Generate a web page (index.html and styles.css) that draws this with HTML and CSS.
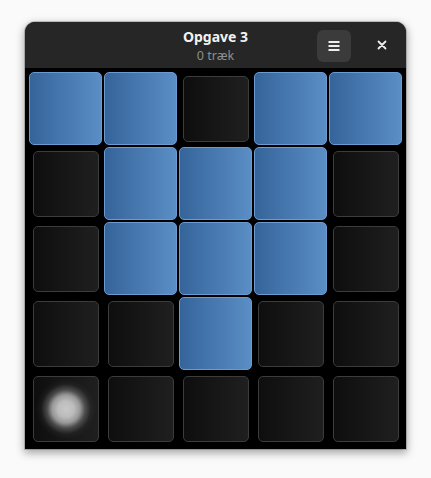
FILE: index.html
```html
<!DOCTYPE html>
<html>
<head>
<meta charset="utf-8">
<link rel="stylesheet" href="styles.css">
</head>
<body>
<div class="window">
  <header class="headerbar">
    <div class="titles">
      <div class="title">Opgave 3</div>
      <div class="subtitle">0 træk</div>
    </div>
    <button class="menu-btn" aria-label="Menu">
      <svg width="12" height="11" viewBox="0 0 12 11"><rect x="0.5" y="1" width="11" height="2" fill="#eee"/><rect x="0.5" y="5" width="11" height="2" fill="#eee"/><rect x="0.5" y="9" width="11" height="2" fill="#eee"/></svg>
    </button>
    <button class="close-btn" aria-label="Luk">
      <svg width="10" height="10" viewBox="0 0 10 10"><path d="M1.5 1.5 L8.5 8.5 M8.5 1.5 L1.5 8.5" stroke="#eee" stroke-width="1.8" stroke-linecap="round"/></svg>
    </button>
  </header>
  <main class="board">
    <div class="cell"><div class="tile on"></div></div>
    <div class="cell"><div class="tile on"></div></div>
    <div class="cell"><div class="tile off"></div></div>
    <div class="cell"><div class="tile on"></div></div>
    <div class="cell"><div class="tile on"></div></div>

    <div class="cell"><div class="tile off"></div></div>
    <div class="cell"><div class="tile on"></div></div>
    <div class="cell"><div class="tile on"></div></div>
    <div class="cell"><div class="tile on"></div></div>
    <div class="cell"><div class="tile off"></div></div>

    <div class="cell"><div class="tile off"></div></div>
    <div class="cell"><div class="tile on"></div></div>
    <div class="cell"><div class="tile on"></div></div>
    <div class="cell"><div class="tile on"></div></div>
    <div class="cell"><div class="tile off"></div></div>

    <div class="cell"><div class="tile off"></div></div>
    <div class="cell"><div class="tile off"></div></div>
    <div class="cell"><div class="tile on"></div></div>
    <div class="cell"><div class="tile off"></div></div>
    <div class="cell"><div class="tile off"></div></div>

    <div class="cell"><div class="tile off glow"></div></div>
    <div class="cell"><div class="tile off"></div></div>
    <div class="cell"><div class="tile off"></div></div>
    <div class="cell"><div class="tile off"></div></div>
    <div class="cell"><div class="tile off"></div></div>
  </main>
</div>
</body>
</html>
```

FILE: styles.css
```css
* { box-sizing: border-box; }
html, body {
  margin: 0;
  padding: 0;
  background: #fafafa;
  width: 431px;
  height: 478px;
  overflow: hidden;
}
body {
  padding: 22px 0 0 25px;
  font-family: "Noto Sans", "Open Sans", sans-serif;
}
.window {
  width: 381px;
  height: 427px;
  border-radius: 10px 10px 0 0;
  overflow: hidden;
  background: #000;
  box-shadow: 0 3px 9px 1px rgba(0,0,0,0.35), 0 0 0 1px rgba(0,0,0,0.18);
  display: flex;
  flex-direction: column;
}
.headerbar {
  height: 46px;
  flex: none;
  background: #262626;
  display: flex;
  align-items: center;
  position: relative;
  padding: 0 12px 0 0;
  justify-content: flex-end;
}
.titles {
  position: absolute;
  left: 0;
  right: 0;
  top: 6px;
  text-align: center;
  pointer-events: none;
}
.title {
  color: #f2f2f2;
  font-weight: 700;
  font-size: 14px;
  line-height: 18px;
}
.subtitle {
  color: #8e8e8e;
  font-size: 12.5px;
  line-height: 16px;
  margin-top: 2px;
}
.menu-btn {
  width: 34px;
  height: 32px;
  border: none;
  border-radius: 6px;
  background: #3b3b3b;
  display: flex;
  align-items: center;
  justify-content: center;
  padding: 0;
  margin-right: 19px;
  margin-top: 1px;
}
.close-btn {
  width: 24px;
  height: 24px;
  border: none;
  background: transparent;
  display: flex;
  align-items: center;
  justify-content: center;
  padding: 0;
}
.board {
  flex: 1;
  padding: 3px;
  display: grid;
  grid-template-columns: repeat(5, 75px);
  grid-template-rows: repeat(5, 75px);
}
.cell {
  display: flex;
  align-items: center;
  justify-content: center;
}
.tile {
  border-radius: 5px;
}
.tile.on {
  width: 73px;
  height: 73px;
  background: linear-gradient(to right, #35649a, #5a8ec5);
  border: 1px solid #6b9bd0;
}
.tile.off {
  width: 66px;
  height: 66px;
  background: linear-gradient(to right, #0e0e0e, #1f1f1f);
  border: 1px solid #3c3c3c;
}
.tile.glow {
  background:
    radial-gradient(circle at 50% 50%, #c8c8c8 0, #bcbcbc 8px, rgba(170,170,170,0.88) 14px, rgba(130,130,130,0.5) 19px, rgba(70,70,70,0.18) 25px, rgba(0,0,0,0) 30px),
    linear-gradient(to right, #0e0e0e, #1f1f1f);
}
```
